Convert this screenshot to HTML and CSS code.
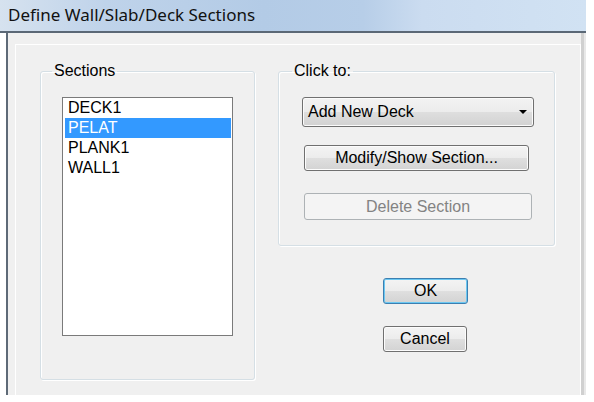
FILE: index.html
```html
<!DOCTYPE html>
<html lang="en">
<head>
  <meta charset="UTF-8">
  <title>Define Wall/Slab/Deck Sections</title>
  <link rel="stylesheet" href="styles.css">
</head>
<body>
  <div class="window">
    <div class="titlebar">Define Wall/Slab/Deck Sections</div>

    <div class="frame">
      <div class="panel">
        <!-- Section list -->
        <fieldset class="group sections">
          <legend>Sections</legend>
          <ul class="list">
            <li>DECK1</li>
            <li class="selected">PELAT</li>
            <li>PLANK1</li>
            <li>WALL1</li>
          </ul>
        </fieldset>

        <div class="side">
          <!-- Actions -->
          <fieldset class="group actions">
            <legend>Click to:</legend>
            <div class="combo">
              <span>Add New Deck</span>
              <svg class="arrow" width="8" height="4" viewBox="0 0 8 4"><path d="M0 0H8L4 4Z" fill="#000"/></svg>
            </div>
            <button class="btn modify">Modify/Show Section...</button>
            <button class="btn delete" disabled>Delete Section</button>
          </fieldset>

          <div class="buttons">
            <button class="btn ok">OK</button>
            <button class="btn cancel">Cancel</button>
          </div>
        </div>
      </div>
    </div>
  </div>
</body>
</html>
```

FILE: styles.css
```css
body {
  margin: 0;
  background: #fff;
  font-family: "Liberation Sans", Arial, sans-serif;
  font-size: 16px;
  color: #000;
}
.window {
  width: 586px;
}
.titlebar {
  height: 33px;
  line-height: 30px;
  padding-left: 8px;
  box-sizing: border-box;
  font-family: "Noto Sans", sans-serif;
  font-size: 17px;
  color: #111;
  background: linear-gradient(to right, #d6e2ef 0%, #bfd3ea 18%, #b3cbe6 45%, #b7cee8 62%, #cbdcf0 72%, #d1e2f3 100%);
  border-bottom: 2px solid #5b6876;
}
.frame {
  margin-left: 6px;
  width: 578px;
  height: 362px;
  box-sizing: border-box;
  background: #f0f0f0;
  border-left: 2px solid #5e6a77;
  border-right: 3px solid #d0d0d0;
  box-shadow: 2px 0 0 #e8e8e8;
  padding: 11px 0 0 7px;
}
.panel {
  width: 566px;
  height: 351px;
  box-sizing: border-box;
  border: 1px solid #fff;
  border-bottom: none;
  padding: 16px 0 0 24px;
  display: flex;
  gap: 23px;
}

/* group boxes */
.group {
  margin: 0;
  border: 1px solid #d5dfe5;
  border-radius: 3px;
  box-shadow: 1px 1px 0 #fff, inset 1px 1px 0 #fff;
  padding: 16px 0 0 21px;
}
.group legend {
  padding: 0 2px;
  margin-left: -10px;
  line-height: 20px;
}
.sections {
  width: 215px;
  height: 319px;
  box-sizing: border-box;
}
.list {
  list-style: none;
  margin: 0;
  padding: 0 1px 0 2px;
  width: 171px;
  height: 239px;
  box-sizing: border-box;
  background: #fff;
  border: 1px solid #7a7a7a;
}
.list li {
  height: 20px;
  line-height: 20px;
  padding-left: 3px;
}
.list li.selected {
  background: #3399ff;
  color: #fff;
}

.side {
  width: 277px;
}
.actions {
  height: 185px;
  box-sizing: border-box;
  padding-left: 23px;
}
.combo {
  width: 232px;
  height: 30px;
  box-sizing: border-box;
  border: 1px solid #707070;
  border-radius: 3px;
  background: linear-gradient(#f3f3f3 0%, #ececec 50%, #dedede 51%, #d2d2d2 100%);
  box-shadow: inset 0 0 0 1px #fbfbfb;
  display: flex;
  align-items: center;
  justify-content: space-between;
  padding: 0 6px 0 5px;
}
.arrow {
  display: block;
}

.btn {
  display: block;
  font-family: "Liberation Sans", Arial, sans-serif;
  font-size: 16px;
  color: #000;
  padding: 0;
  border: 1px solid #707070;
  border-radius: 3px;
  background: linear-gradient(#f4f4f4 0%, #ececec 50%, #dfdfdf 51%, #d3d3d3 100%);
  box-shadow: inset 0 0 0 1px #fcfcfc;
}
.modify {
  width: 225px;
  height: 26px;
  margin: 18px 0 0 2px;
}
.delete {
  width: 228px;
  height: 27px;
  margin: 22px 0 0 2px;
  color: #838383;
  border-color: #adb2b5;
  background: #f4f4f4;
  box-shadow: none;
}

.buttons {
  padding: 32px 0 0 105px;
  display: flex;
  flex-direction: column;
  gap: 22px;
}
.ok {
  width: 85px;
  height: 26px;
  border-color: #3c7fb1;
  box-shadow: inset 0 0 0 1px #6cc8f2;
}
.cancel {
  width: 84px;
  height: 26px;
}
```
